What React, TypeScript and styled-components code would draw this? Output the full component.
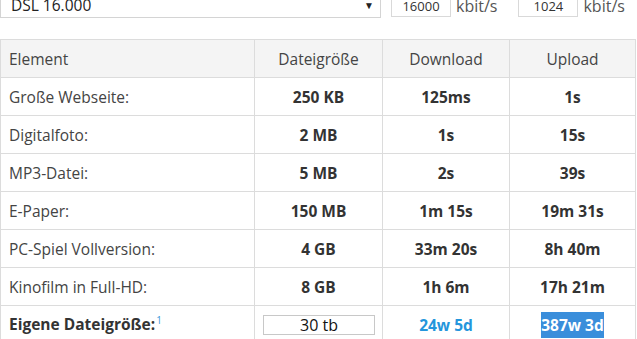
import styled, { createGlobalStyle } from 'styled-components';

const GlobalStyle = createGlobalStyle`
  html, body {
    margin: 0;
    padding: 0;
    background: #fff;
    font-family: 'Open Sans', 'Liberation Sans', sans-serif;
    color: #444;
    overflow: hidden;
  }
`;

type Row = { name: string; size: string; down: string; up: string };

const rows: Row[] = [
  { name: 'Große Webseite:', size: '250 KB', down: '125ms', up: '1s' },
  { name: 'Digitalfoto:', size: '2 MB', down: '1s', up: '15s' },
  { name: 'MP3-Datei:', size: '5 MB', down: '2s', up: '39s' },
  { name: 'E-Paper:', size: '150 MB', down: '1m 15s', up: '19m 31s' },
  { name: 'PC-Spiel Vollversion:', size: '4 GB', down: '33m 20s', up: '8h 40m' },
  { name: 'Kinofilm in Full-HD:', size: '8 GB', down: '1h 6m', up: '17h 21m' },
];

function App(): JSX.Element {
  return (
    <Page>
      <GlobalStyle />
      <FormRow>
        <SelectBox>
          <span>DSL 16.000</span>
          <Arrow>▼</Arrow>
        </SelectBox>
        <SpeedInput defaultValue="16000" />
        <Unit>kbit/s</Unit>
        <SpeedInput defaultValue="1024" $gap={21} />
        <Unit>kbit/s</Unit>
      </FormRow>
      <Table>
        <colgroup>
          <col style={{ width: 254 }} />
          <col style={{ width: 128 }} />
          <col style={{ width: 127 }} />
          <col style={{ width: 126 }} />
        </colgroup>
        <thead>
          <tr>
            <Th $left>Element</Th>
            <Th>Dateigröße</Th>
            <Th>Download</Th>
            <Th>Upload</Th>
          </tr>
        </thead>
        <tbody>
          {rows.map((r, i) => (
            <tr key={`row-${i + 1}`}>
              <NameCell>{r.name}</NameCell>
              <ValueCell>{r.size}</ValueCell>
              <ValueCell>{r.down}</ValueCell>
              <ValueCell>{r.up}</ValueCell>
            </tr>
          ))}
          <tr>
            <NameCell $bold>
              Eigene Dateigröße:<Note>1</Note>
            </NameCell>
            <InputCell>
              <SizeInput defaultValue="30 tb" />
            </InputCell>
            <ValueCell $blue>24w 5d</ValueCell>
            <ValueCell>
              <Selected>387w 3d</Selected>
            </ValueCell>
          </tr>
        </tbody>
      </Table>
    </Page>
  );
}

export default App;

const Page = styled.div`
  width: 637px;
  height: 339px;
  overflow: hidden;
`;

const FormRow = styled.div`
  display: flex;
  align-items: flex-end;
  margin-top: -8px;
  height: 26px;
`;

const SelectBox = styled.div`
  box-sizing: border-box;
  width: 381px;
  height: 26px;
  border: 1px solid #d4d4d4;
  display: flex;
  align-items: center;
  justify-content: space-between;
  padding: 0 6px 0 10px;
  font-size: 15.5px;
  color: #222;
`;

const Arrow = styled.span`
  font-size: 10px;
  color: #222;
`;

const SpeedInput = styled.input<{ $gap?: number }>`
  box-sizing: border-box;
  width: 60px;
  height: 22px;
  margin: 0 0 1px ${p => p.$gap ?? 10}px;
  border: 1px solid #d9d9d9;
  text-align: center;
  font-family: 'Open Sans', 'Liberation Sans', sans-serif;
  font-size: 13px;
  color: #333;
  padding: 0;
  outline: none;
`;

const Unit = styled.span`
  font-size: 16px;
  color: #555;
  margin-left: 5px;
  line-height: 22px;
  margin-bottom: 1px;
`;

const Table = styled.table`
  margin-top: 21px;
  width: 635px;
  border-collapse: collapse;
  table-layout: fixed;
  font-size: 15.5px;

  tr {
    height: 38px;
  }

  td,
  th {
    border: 1px solid #dcdcdc;
    padding: 0 8px;
  }
`;

const Th = styled.th<{ $left?: boolean }>`
  background: #f4f4f4;
  font-weight: 400;
  color: #444;
  text-align: ${p => (p.$left ? 'left' : 'center')};
`;

const NameCell = styled.td<{ $bold?: boolean }>`
  text-align: left;
  color: ${p => (p.$bold ? '#333' : '#444')};
  font-weight: ${p => (p.$bold ? 700 : 400)};
`;

const ValueCell = styled.td<{ $blue?: boolean }>`
  text-align: center;
  font-weight: 700;
  color: ${p => (p.$blue ? '#2496dc' : '#333')};
`;

const InputCell = styled.td`
  text-align: center;
`;

const SizeInput = styled.input`
  box-sizing: border-box;
  width: 112px;
  height: 20px;
  border: 1px solid #c8c8c8;
  padding: 0;
  text-align: center;
  font-family: 'Open Sans', 'Liberation Sans', sans-serif;
  font-size: 16px;
  color: #111;
  outline: none;
  display: block;
`;

const Note = styled.sup`
  font-size: 10px;
  font-weight: 400;
  color: #3c9ad8;
  margin-left: 1px;
`;

const Selected = styled.span`
  background: #3a8edb;
  color: #fff;
  padding: 2px 0;
`;
